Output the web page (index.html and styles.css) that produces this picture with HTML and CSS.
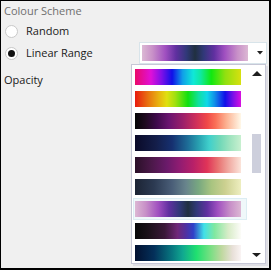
FILE: index.html
```html
<!DOCTYPE html>
<html lang="en">
<head>
  <meta charset="UTF-8">
  <title>Colour Scheme</title>
  <link rel="stylesheet" href="styles.css">
</head>
<body>
  <div class="window">
    <div class="heading">Colour Scheme</div>
    <label class="option"><span class="radio"></span>Random</label>

    <div class="option-row">
      <label class="option"><span class="radio checked"></span>Linear Range</label>

      <div class="combo">
        <div class="swatch g7"></div>
        <svg class="combo-arrow" width="6" height="4" viewBox="0 0 6 4"><polygon points="0,0 6,0 3,3.5" /></svg>

        <!-- open dropdown -->
        <div class="popup">
          <div class="list">
            <div class="item"><div class="swatch g1"></div></div>
            <div class="item"><div class="swatch g2"></div></div>
            <div class="item"><div class="swatch g3"></div></div>
            <div class="item"><div class="swatch g4"></div></div>
            <div class="item"><div class="swatch g5"></div></div>
            <div class="item"><div class="swatch g6"></div></div>
            <div class="item selected"><div class="swatch g7"></div></div>
            <div class="item"><div class="swatch g8"></div></div>
            <div class="item"><div class="swatch g9"></div></div>
          </div>
          <div class="scrollbar">
            <svg class="arrow-up" width="10" height="5" viewBox="0 0 10 5"><polygon points="0,5 10,5 5,0" /></svg>
            <div class="thumb"></div>
            <svg class="arrow-down" width="9" height="4" viewBox="0 0 9 4"><polygon points="0,0 9,0 4.5,4" /></svg>
          </div>
        </div>
      </div>
    </div>

    <div class="heading dark">Opacity</div>
  </div>
</body>
</html>
```

FILE: styles.css
```css
* {
  box-sizing: border-box;
}

body {
  margin: 0;
  font-family: 'Open Sans', 'Liberation Sans', sans-serif;
  font-size: 11px;
}

.window {
  width: 271px;
  height: 270px;
  background: #f0f0f0;
  border: 1px solid #000;
  border-right-width: 2px;
  border-bottom-width: 2px;
  padding: 2px 2px 1px;
  overflow: hidden;
}

.heading {
  line-height: 16px;
  color: #6f6f6f;
  padding-left: 1px;
}

.heading.dark {
  color: #1a1a1a;
  margin-top: 8px;
}

.option {
  display: flex;
  align-items: center;
  height: 22px;
  color: #1a1a1a;
  line-height: 16px;
}

.heading + .option {
  margin-top: 1px;
}

.radio {
  width: 13px;
  height: 13px;
  margin: 0 8px 0 2px;
  border: 1px solid #c9c9c9;
  border-radius: 50%;
  background: #fff;
  display: flex;
  align-items: center;
  justify-content: center;
}

.radio.checked::after {
  content: '';
  width: 7px;
  height: 7px;
  border-radius: 50%;
  background: #111;
}

.option-row {
  display: flex;
  align-items: center;
}

.combo {
  position: relative;
  margin-left: auto;
  width: 128px;
  height: 22px;
  background: #fff;
  border: 1px solid #d8e4ea;
  padding: 2px;
  display: flex;
  align-items: center;
}

.combo .swatch {
  width: 106px;
}

.combo-arrow {
  margin-left: 9px;
  fill: #222;
}

.swatch {
  width: 110px;
  height: 16px;
}

.popup {
  position: absolute;
  left: -9px;
  top: 21px;
  width: 135px;
  height: 200px;
  background: #fff;
  border: 1px solid #c6c7d6;
  box-shadow: 2px 2px 0 #dedee4;
  display: flex;
  z-index: 10;
}

.list {
  width: 117px;
  padding: 1px 0 0 1px;
  overflow: hidden;
}

.item {
  width: 114px;
  height: 22px;
  border: 1px solid transparent;
  padding: 2px 1px;
}

.item.selected {
  border-color: #dcedf3;
  background: #f0f8fa;
}

.scrollbar {
  flex: 1;
  display: flex;
  flex-direction: column;
  padding-left: 3px;
}

.scrollbar svg {
  fill: #1e1e1e;
}

.arrow-up {
  margin-top: 6px;
}

.thumb {
  width: 9px;
  height: 39px;
  margin-top: 58px;
  background: #cdcfdc;
}

.arrow-down {
  margin-top: auto;
  margin-bottom: 6px;
}

/* colour ranges */
.g1 { background: linear-gradient(to right, #ea0a6a 0%, #e010d8 15%, #8010e8 25%, #1010e8 35%, #10a0e8 45%, #10e8d8 55%, #10e8a0 62%, #10e810 72%, #90e010 85%, #d8e010 100%); }
.g2 { background: linear-gradient(to right, #e81a10 0%, #e87010 12%, #e8b010 22%, #e0e010 30%, #a0e010 38%, #10e010 50%, #10e0a0 60%, #10d8e8 68%, #1090e8 75%, #1010e8 85%, #8010e8 93%, #d810e0 100%); }
.g3 { background: linear-gradient(to right, #050505 0%, #200a20 10%, #3d0a4a 20%, #6a1470 32%, #9a1f6a 45%, #d0305a 58%, #f04848 68%, #fa7058 76%, #fcb090 86%, #fff8e8 100%); }
.g4 { background: linear-gradient(to right, #0a0a28 0%, #141e4a 20%, #163070 35%, #1e6e98 50%, #28a0b0 60%, #40d0cc 70%, #70d8b8 80%, #a0e4c0 90%, #c8f0d0 100%); }
.g5 { background: linear-gradient(to right, #2a1028 0%, #4a1848 15%, #6a1a6a 30%, #901c72 42%, #b82068 55%, #e03458 68%, #e87070 78%, #f0a8a0 88%, #fbe4da 100%); }
.g6 { background: linear-gradient(to right, #1c2434 0%, #2c3a52 18%, #4a5e78 35%, #68848c 48%, #78a880 60%, #a8c480 72%, #ccd090 85%, #eeeec0 100%); }
.g7 { background: linear-gradient(to right, #dcb8d4 0%, #c890c8 10%, #a050c0 22%, #6030a0 32%, #303878 42%, #203040 50%, #303878 58%, #6030a0 68%, #a050c0 78%, #c890c8 90%, #dcb8d4 100%); }
.g8 { background: linear-gradient(to right, #080808 0%, #1a1018 12%, #3a1838 28%, #702878 40%, #5030a0 48%, #3040c8 55%, #40e0e8 65%, #80e8a0 75%, #d8ecc8 88%, #fcfcf8 100%); }
.g9 { background: linear-gradient(to right, #021030 0%, #04305a 18%, #087880 35%, #10a890 45%, #20e070 58%, #70e080 70%, #c0d8a0 82%, #e8e0d8 92%, #faf4f4 100%); }
```
